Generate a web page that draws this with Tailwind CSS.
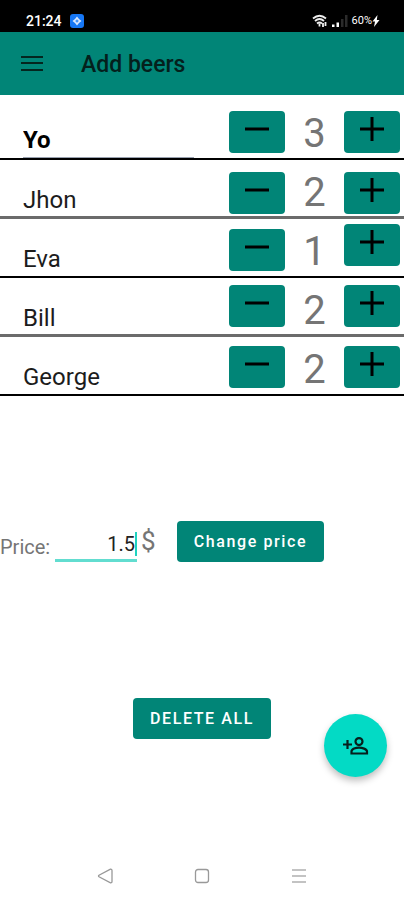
<!DOCTYPE html>
<html lang="en">
<head>
  <meta charset="UTF-8">
  <meta name="viewport" content="width=device-width, initial-scale=1.0">
  <title>Add beers</title>
  <script src="https://cdn.jsdelivr.net/npm/@tailwindcss/browser@4"></script>
</head>
<body class="min-h-screen flex flex-col bg-white font-[Roboto,sans-serif] text-black">

  <!-- Status bar -->
  <div class="flex h-8 items-center bg-black pt-[10px] pr-6 pl-[26px] text-white">
    <span class="text-sm font-medium">21:24</span>
    <svg class="ml-2 h-[14px] w-[14px]" viewBox="0 0 14 14">
      <rect width="14" height="14" rx="3" fill="#1677f5" />
      <path d="M7 2.5L9 5L11.5 7L9 9L7 11.5L5 9L2.5 7L5 5Z" fill="#d8e8ff" />
      <path d="M7 5.5v3M5.5 7h3" stroke="#1677f5" />
    </svg>
    <div class="ml-auto flex items-center gap-1">
      <svg class="h-[14px] w-4" viewBox="0 0 16 14" fill="none" stroke="#eee" stroke-width="1.8">
        <path d="M1 4.5Q7.500 -1 14 4.500M3 7Q7.500 3 12 7M5 9.500Q7.500 7.500 10 9.500" />
        <path d="M7.500 9.500v3M11 13V9M13.500 8v4" />
      </svg>
      <svg class="h-3 w-4" viewBox="0 0 16 12">
        <path d="M0 9.500h2.500V12H0zM4.500 7.500H7V12H4.500z" fill="#fff" />
        <path d="M9 4h2.500v8H9zM13 0h2.500v12H13z" fill="#2b2b2b" />
      </svg>
      <span class="text-[11px]">60%</span>
      <svg class="-ml-1 h-3 w-2" viewBox="0 0 8 12"><path d="M5.500 0L0.500 6.500H3L2 12L7.500 5H4.800Z" fill="#fff" /></svg>
    </div>
  </div>

  <!-- App bar -->
  <header class="flex h-[63px] items-center bg-[#018577] pl-[21px]">
    <button type="button" aria-label="Open menu">
      <svg class="h-4 w-[22px]" viewBox="0 0 22 16" stroke="#04261f" stroke-width="2"><path d="M0 1h22M0 7h22M0 14h22" /></svg>
    </button>
    <h1 class="ml-[38px] pt-[2px] text-[23px] leading-8 font-medium text-[#04201c]">Add beers</h1>
  </header>

  <main class="relative flex grow flex-col">
    <ul>
      <li class="flex h-[65px] items-end border-b-2 border-black pr-1 pl-[23px]">
        <input type="text" aria-label="Name" value="Yo" class="h-[34px] w-[171px] min-w-0 border-b border-gray-400 pb-[2px] text-2xl leading-8 font-bold outline-none">
        <div class="ml-auto flex h-full items-start pt-4">
          <button type="button" aria-label="Remove beer from Yo" class="flex h-[42px] w-14 justify-center rounded bg-[#018577] pt-[6px]">
            <svg class="h-6 w-6" viewBox="0 0 24 24" stroke="#000" stroke-width="3"><path d="M0 12h24" /></svg>
          </button>
          <span class="w-[59px] self-end pb-1 text-center text-[40px] leading-10 text-[#757575]">3</span>
          <button type="button" aria-label="Add beer to Yo" class="flex h-[42px] w-14 justify-center rounded bg-[#018577] pt-[6px]">
            <svg class="h-6 w-6" viewBox="0 0 24 24" stroke="#000" stroke-width="3"><path d="M0 12h24M12 0v24" /></svg>
          </button>
        </div>
      </li>
      <li class="flex h-[59px] items-end border-b-3 border-[#6b6b6b] pr-1 pl-[23px]">
        <input type="text" aria-label="Name" value="Jhon" class="h-8 w-[171px] min-w-0 text-2xl leading-8 text-[#1c1c1c] outline-none">
        <div class="ml-auto flex h-full items-start pt-3">
          <button type="button" aria-label="Remove beer from Jhon" class="flex h-[42px] w-14 justify-center rounded bg-[#018577] pt-[6px]">
            <svg class="h-6 w-6" viewBox="0 0 24 24" stroke="#000" stroke-width="3"><path d="M0 12h24" /></svg>
          </button>
          <span class="w-[59px] self-end pb-[3px] text-center text-[40px] leading-10 text-[#757575]">2</span>
          <button type="button" aria-label="Add beer to Jhon" class="flex h-[42px] w-14 justify-center rounded bg-[#018577] pt-[6px]">
            <svg class="h-6 w-6" viewBox="0 0 24 24" stroke="#000" stroke-width="3"><path d="M0 12h24M12 0v24" /></svg>
          </button>
        </div>
      </li>
      <li class="flex h-[59px] items-end border-b-2 border-black pr-1 pl-[23px]">
        <input type="text" aria-label="Name" value="Eva" class="h-[33px] w-[171px] min-w-0 pb-px text-2xl leading-8 text-[#1c1c1c] outline-none">
        <div class="ml-auto flex h-full items-start pt-[5px]">
          <button type="button" aria-label="Remove beer from Eva" class="mt-[5px] flex h-[42px] w-14 justify-center rounded bg-[#018577] pt-[6px]">
            <svg class="h-6 w-6" viewBox="0 0 24 24" stroke="#000" stroke-width="3"><path d="M0 12h24" /></svg>
          </button>
          <span class="w-[59px] self-end pb-1 text-center text-[40px] leading-10 text-[#757575]">1</span>
          <button type="button" aria-label="Add beer to Eva" class="flex h-[42px] w-14 justify-center rounded bg-[#018577] pt-[6px]">
            <svg class="h-6 w-6" viewBox="0 0 24 24" stroke="#000" stroke-width="3"><path d="M0 12h24M12 0v24" /></svg>
          </button>
        </div>
      </li>
      <li class="flex h-[59px] items-end border-b-3 border-[#6b6b6b] pr-1 pl-[23px]">
        <input type="text" aria-label="Name" value="Bill" class="h-8 w-[171px] min-w-0 text-2xl leading-8 text-[#1c1c1c] outline-none">
        <div class="ml-auto flex h-full items-start pt-[7px]">
          <button type="button" aria-label="Remove beer from Bill" class="flex h-[42px] w-14 justify-center rounded bg-[#018577] pt-[6px]">
            <svg class="h-6 w-6" viewBox="0 0 24 24" stroke="#000" stroke-width="3"><path d="M0 12h24" /></svg>
          </button>
          <span class="w-[59px] self-end pb-[3px] text-center text-[40px] leading-10 text-[#757575]">2</span>
          <button type="button" aria-label="Add beer to Bill" class="flex h-[42px] w-14 justify-center rounded bg-[#018577] pt-[6px]">
            <svg class="h-6 w-6" viewBox="0 0 24 24" stroke="#000" stroke-width="3"><path d="M0 12h24M12 0v24" /></svg>
          </button>
        </div>
      </li>
      <li class="flex h-[59px] items-end border-b-2 border-black pr-1 pl-[23px]">
        <input type="text" aria-label="Name" value="George" class="h-[33px] w-[171px] min-w-0 pb-px text-2xl leading-8 text-[#1c1c1c] outline-none">
        <div class="ml-auto flex h-full items-start pt-[9px]">
          <button type="button" aria-label="Remove beer from George" class="flex h-[42px] w-14 justify-center rounded bg-[#018577] pt-[6px]">
            <svg class="h-6 w-6" viewBox="0 0 24 24" stroke="#000" stroke-width="3"><path d="M0 12h24" /></svg>
          </button>
          <span class="w-[59px] self-end pb-1 text-center text-[40px] leading-10 text-[#757575]">2</span>
          <button type="button" aria-label="Add beer to George" class="flex h-[42px] w-14 justify-center rounded bg-[#018577] pt-[6px]">
            <svg class="h-6 w-6" viewBox="0 0 24 24" stroke="#000" stroke-width="3"><path d="M0 12h24M12 0v24" /></svg>
          </button>
        </div>
      </li>
    </ul>

    <!-- Price -->
    <form class="mt-[125px] flex h-[41px] items-end">
      <label for="price" class="w-[55px] pb-px text-xl leading-7 text-[#757575]">Price:</label>
      <div class="flex h-8 w-[82px] items-start border-b-3 border-[#62ddd0]">
        <input type="text" id="price" inputmode="decimal" value="1.5" class="h-7 w-full min-w-0 text-right text-xl leading-7 text-[#222] outline-none">
        <!-- caret -->
        <span class="mt-[2px] h-6 w-[2px] shrink-0 bg-[#1fd3c0]"></span>
      </div>
      <span class="ml-1 w-9 self-center pb-px text-[26px] leading-8 text-[#757575]">$</span>
      <button type="submit" class="h-[41px] w-[147px] rounded bg-[#018577] text-base font-medium tracking-widest text-white">Change price</button>
    </form>

    <button type="button" class="mt-[136px] h-[41px] w-[138px] self-center rounded bg-[#018577] text-base font-medium tracking-widest text-white">DELETE ALL</button>

    <!-- Add person -->
    <button type="button" aria-label="Add person" class="absolute right-[17px] bottom-[73px] flex size-[63px] items-center justify-center rounded-full bg-[#03dac5] shadow-[0_4px_7px_rgba(0,0,0,0.25)]">
      <svg class="h-[18px] w-[26px]" viewBox="0 0 26 18" fill="none" stroke="#06201d" stroke-width="2.200">
        <path d="M0 7.500h9M4.500 3v9" />
        <circle cx="16" cy="4.600" r="3.500" />
        <path d="M8.500 16.500v-2c0-2.500 4.500-3.900 7.500-3.900s8 1.400 8 3.900v2z" />
      </svg>
    </button>
  </main>

  <!-- System navigation -->
  <nav class="flex h-[50px] items-center justify-center gap-[81px] pt-[2px]">
    <button type="button" aria-label="Back">
      <svg class="size-4" viewBox="0 0 16 16" fill="none" stroke="#999" stroke-width="1.300"><path d="M13.500 1.200L2 7.200Q1 8 2 8.800L13.500 14.800Q15 15 15 13.500V2.500Q15 1 13.500 1.200Z" /></svg>
    </button>
    <button type="button" aria-label="Home">
      <svg class="size-4" viewBox="0 0 16 16" fill="none" stroke="#999" stroke-width="1.300"><rect x="1.500" y="1.500" width="13" height="13" rx="2.500" /></svg>
    </button>
    <button type="button" aria-label="Recent apps">
      <svg class="size-4" viewBox="0 0 16 16" fill="none" stroke="#b0b0b0" stroke-width="1.300"><path d="M1 2h14M1 8h14M1 14h14" /></svg>
    </button>
  </nav>
</body>
</html>
